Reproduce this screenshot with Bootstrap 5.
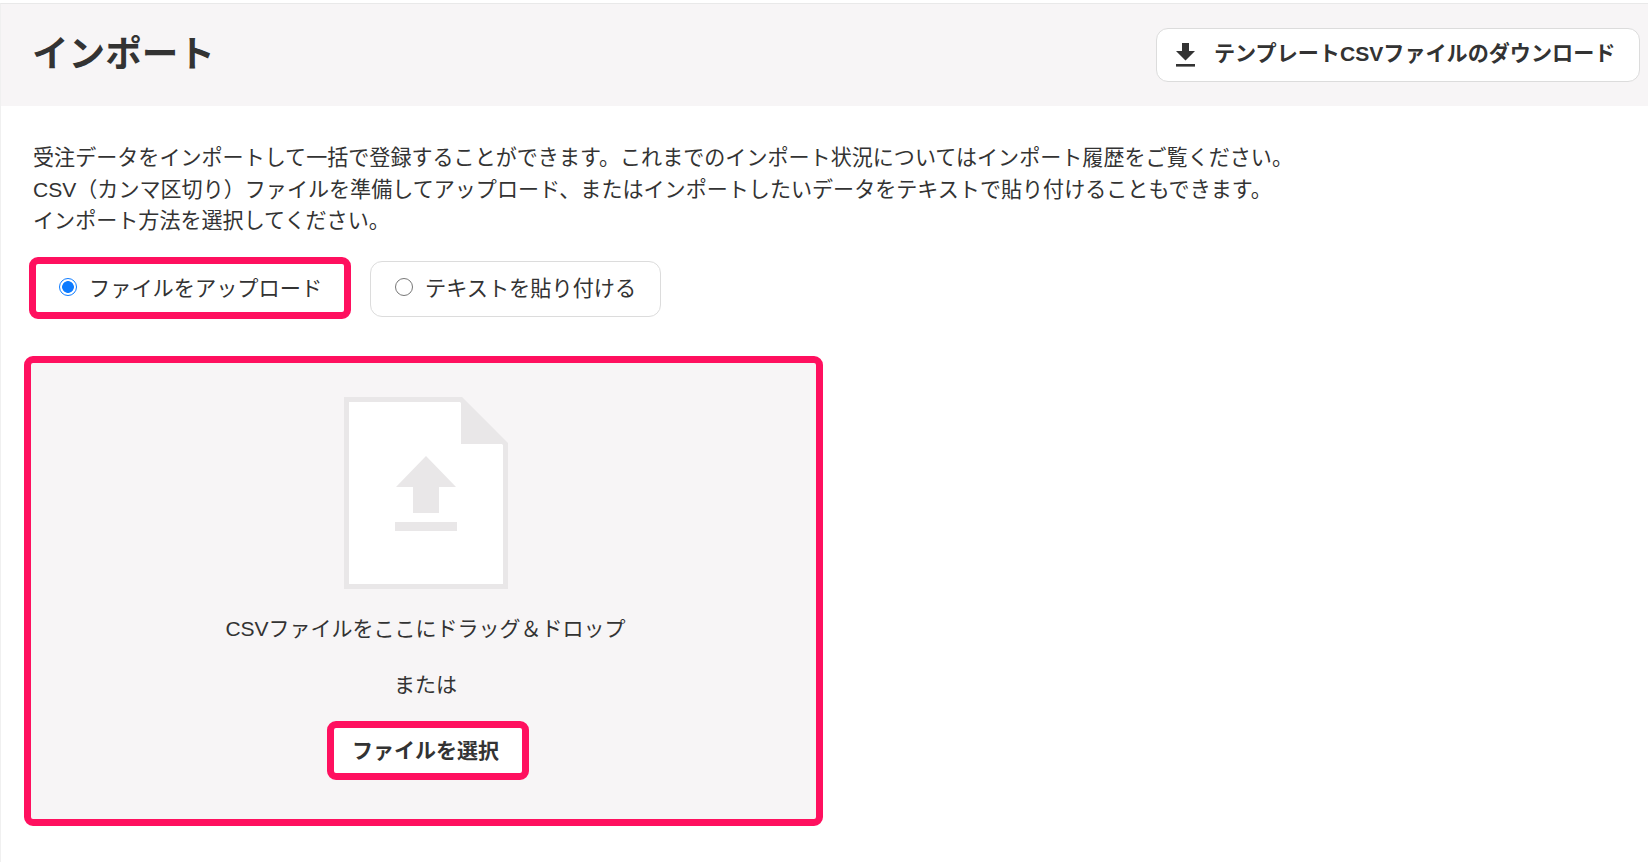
<!DOCTYPE html>
<html lang="ja">
<head>
<meta charset="utf-8">
<title>インポート</title>
<link href="https://cdn.jsdelivr.net/npm/bootstrap@5.3.0/dist/css/bootstrap.min.css" rel="stylesheet">
<style>
html,body{height:100%;overflow:hidden}
body{font-family:"Liberation Sans","Noto Sans CJK JP",sans-serif;color:#333;font-size:21px;padding-top:3px;background:#fff}
.page-wrap{border-top:1px solid #e9e9e9;border-left:1px solid #f0f0f0;min-height:100%}
.page-head{background:#f7f5f6;height:102px;padding:0 8px 0 31px}
.page-title{font-size:36.600px;font-weight:700;margin:0;color:#333;line-height:1}
.dl-btn{height:54px;width:484px;background:#fff;border:1px solid #dcdcdc;border-radius:12px;font-size:21.100px;font-weight:700;color:#333;padding:0 0 0 19px;gap:19px}
.dl-btn span{margin-bottom:2px}
.dl-btn:hover{background:#fff;color:#333;border-color:#dcdcdc}
.page-main{padding:36px 0 0 32px}
.intro{font-size:21.070px;line-height:31.700px;margin:0 0 20px}
.choice-row{gap:19px;margin-left:-4px}
.choice{margin:0;display:flex;align-items:center;background:#fff;border-radius:12px;min-height:0;gap:12px;cursor:pointer;font-size:21.200px}
.choice .form-check-input{width:18px;height:18px;margin:-3px 0 0 0;float:none;flex:none;border:1.500px solid #777}
.choice .form-check-input:checked{background-color:#fff;background-image:radial-gradient(circle,#0d7bff 0,#0d7bff 5.500px,#fff 6.200px);border-color:#0d7bff}
.choice-on{height:62px;width:322px;border:7px solid #ff105f;border-radius:9px;padding-left:23px}
.choice-on span{margin-top:2px}
.choice-off{height:56px;width:291px;border:1px solid #dcdcdc;padding-left:24px;margin-top:2px}
.choice-off .form-check-input{margin-top:-5px}
.drop-zone{width:799px;height:470px;margin:37px 0 0 -9px;background:#f7f5f6;border:7px solid #ff105f;border-radius:9px;padding:34px 0 0 4px}
.drop-icon{display:block;width:164px;height:192px}
.drop-text{margin:0;line-height:32px}
.drop-or{margin-top:24px}
.pick-btn{width:202px;height:59px;margin:20px 0 0 5px;background:#fff;border:7px solid #ff105f;border-radius:9px;font-size:21px;font-weight:700;color:#333;padding:0 5px 0 0}
.pick-btn:hover{background:#fff;color:#333;border-color:#ff105f}
</style>
</head>
<body>
<div class="page-wrap">
  <header class="page-head d-flex align-items-center justify-content-between">
    <h1 class="page-title">インポート</h1>
    <button type="button" class="btn dl-btn d-flex align-items-center">
      <svg width="19" height="24" viewBox="0 0 19 24" aria-hidden="true"><path fill="#333" d="M6 0h7v8h6l-9.500 9.500L0 8h6z"/><rect y="21" width="19" height="2.600" fill="#333"/></svg>
      <span>テンプレートCSVファイルのダウンロード</span>
    </button>
  </header>
  <main class="page-main">
    <p class="intro">受注データをインポートして一括で登録することができます。これまでのインポート状況についてはインポート履歴をご覧ください。<br>CSV（カンマ区切り）ファイルを準備してアップロード、またはインポートしたいデータをテキストで貼り付けることもできます。<br>インポート方法を選択してください。</p>
    <div class="choice-row d-flex align-items-center">
      <label class="form-check choice choice-on"><input class="form-check-input" type="radio" name="method" checked><span>ファイルをアップロード</span></label>
      <label class="form-check choice choice-off"><input class="form-check-input" type="radio" name="method"><span>テキストを貼り付ける</span></label>
    </div>
    <section class="drop-zone d-flex flex-column align-items-center">
      <svg class="drop-icon" viewBox="0 0 164 192" aria-hidden="true">
        <path d="M2.500 2.500H117L161.500 47V189.500H2.500Z" fill="#fff" stroke="#e9e7e8" stroke-width="5"/>
        <path d="M117 1L163 47H117Z" fill="#e9e7e8"/>
        <path d="M82 59L112 90H95V116H69V90H52Z" fill="#e9e7e8"/>
        <rect x="51" y="125" width="62" height="9" fill="#e9e7e8"/>
      </svg>
      <p class="drop-text mt-4">CSVファイルをここにドラッグ＆ドロップ</p>
      <p class="drop-text drop-or">または</p>
      <button type="button" class="btn pick-btn">ファイルを選択</button>
    </section>
  </main>
</div>
</body>
</html>
